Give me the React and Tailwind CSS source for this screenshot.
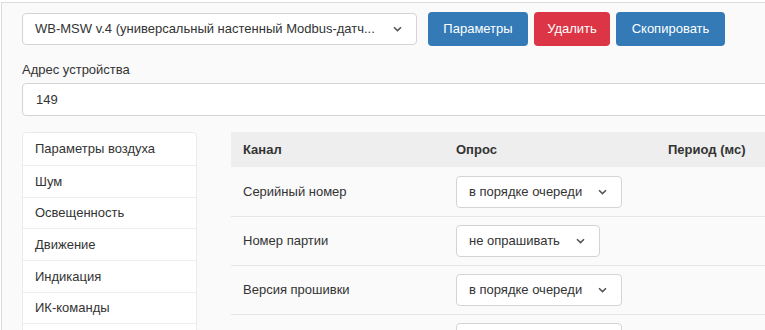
import React from 'react';

const Chevron = () => (
  <svg width="9" height="6" viewBox="0 0 9 6" className="shrink-0">
    <path d="M1 1.2 L4.5 4.6 L8 1.2" fill="none" stroke="#555" strokeWidth="1.6" />
  </svg>
);

const Select = ({ text, width, h = 32 }) => (
  <div
    className="flex items-center justify-between bg-white border border-[#d4d4d4] rounded-[4px] pl-[12px] pr-[14px] text-[13px] text-[#333]"
    style={{ width, height: h }}
  >
    <span className="whitespace-nowrap overflow-hidden">{text}</span>
    <Chevron />
  </div>
);

const menu = [
  { t: 'Параметры воздуха', h: 'h-[32px]' },
  { t: 'Шум', h: 'h-[32px]' },
  { t: 'Освещенность', h: 'h-[31px]' },
  { t: 'Движение', h: 'h-[32px]' },
  { t: 'Индикация', h: 'h-[32px]' },
  { t: 'ИК-команды', h: 'h-[31px]' },
  { t: '', h: 'h-[32px]' },
];

const rows = [
  { name: 'Серийный номер', poll: 'в порядке очереди', w: 166 },
  { name: 'Номер партии', poll: 'не опрашивать', w: 144 },
  { name: 'Версия прошивки', poll: 'в порядке очереди', w: 166 },
  { name: '', poll: '', w: 166 },
];

export default function App() {
  return (
    <div className="w-[765px] h-[330px] overflow-hidden bg-white" style={{ fontFamily: '"Liberation Sans", Arial, sans-serif' }}>
      <div className="mt-[2px] ml-[1px] w-[900px] h-[400px] bg-[#fafafa] border-t border-l border-[#dcdcdc] pl-[20px] pt-[9px] text-[#333]">
        <div className="flex items-center gap-[6px]">
          <div className="mr-[5px]">
            <Select text="WB-MSW v.4 (универсальный настенный Modbus-датч..." width={395} h={32} />
          </div>
          <button className="h-[34px] w-[100px] rounded-[4px] bg-[#337ab7] text-white text-[13px]">Параметры</button>
          <button className="h-[34px] w-[76px] rounded-[4px] bg-[#dc3545] text-white text-[13px]">Удалить</button>
          <button className="h-[34px] w-[109px] rounded-[4px] bg-[#337ab7] text-white text-[13px]">Скопировать</button>
        </div>

        <div className="mt-[15px] text-[13px] leading-[18px]">Адрес устройства</div>
        <div className="mt-[4px] h-[33px] w-[860px] bg-white border border-[#d4d4d4] rounded-[4px] pl-[13px] flex items-center text-[13px]">149</div>

        <div className="flex mt-[16px]">
          <div className="w-[175px] shrink-0 bg-white border border-[#eaeaea] rounded-[4px]">
            {menu.map((m, i) => (
              <div key={i} className={`${m.h} flex items-center px-[12px] text-[13px] ${i > 0 ? 'border-t border-[#ececec]' : ''}`}>{m.t}</div>
            ))}
          </div>

          <div className="ml-[34px] flex-1">
            <div className="flex h-[35px] items-center bg-[#eeeeee] font-bold text-[13px]">
              <div className="w-[213px] pl-[12px]">Канал</div>
              <div className="w-[212px] pl-[12px]">Опрос</div>
              <div className="pl-[12px]">Период (мс)</div>
            </div>
            {rows.map((r, i) => (
              <div key={i} className={`flex h-[49px] items-center text-[13px] ${i > 0 ? 'border-t border-[#e6e6e6]' : ''}`}>
                <div className="w-[213px] pl-[12px]">{r.name}</div>
                <div className="w-[212px] pl-[12px]">
                  <Select text={r.poll} width={r.w} />
                </div>
                <div className="pl-[12px]"></div>
              </div>
            ))}
          </div>
        </div>
      </div>
    </div>
  );
}
